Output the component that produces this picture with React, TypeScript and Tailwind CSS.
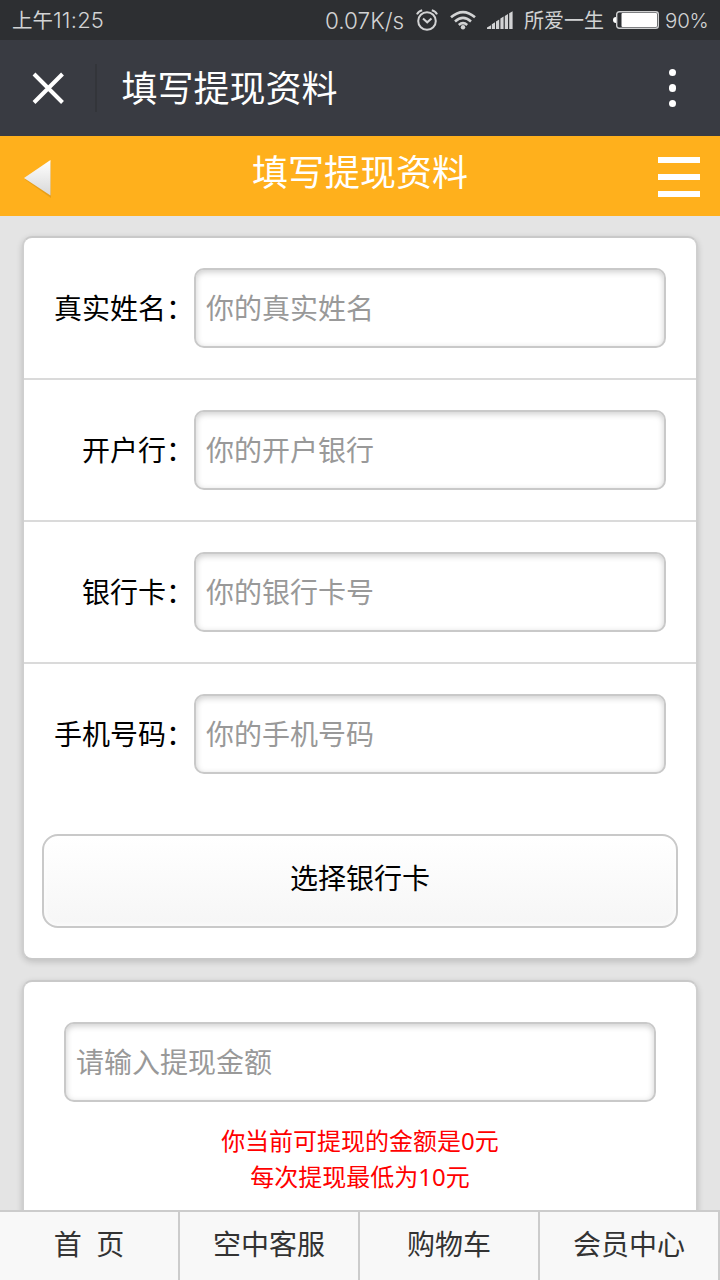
const fields = [
  { label: '真实姓名：', placeholder: '你的真实姓名' },
  { label: '开户行：', placeholder: '你的开户银行' },
  { label: '银行卡：', placeholder: '你的银行卡号' },
  { label: '手机号码：', placeholder: '你的手机号码' },
];

const tabs = ['首\u00a0\u00a0页', '空中客服', '购物车', '会员中心'];

const inputClass =
  'block h-20 rounded-[10px] border-2 border-[#c9c9c9] bg-white px-2.5 text-[28px] text-black placeholder:text-[#999] shadow-[inset_0_2px_6px_rgba(0,0,0,0.2)] outline-none';

const cardClass =
  'rounded-[10px] border-2 border-[#c9c9c9] border-x-[#cfcfcf] bg-white shadow-[0_2px_6px_rgba(0,0,0,0.16)]';

function StatusBar() {
  return (
    <div className="flex h-10 items-center bg-[#2d2f32] pl-3 text-[20px] leading-10 text-[#d2d3d4]">
      <span className="w-[313px] pt-px font-['Inter','Noto_Sans_CJK_SC',sans-serif] text-[20.5px]">
        上午<span className="text-[22px] font-light tracking-[0.2px]">11:25</span>
      </span>
      <span className="w-[91px] pt-0.5 font-['Inter'] text-[22.5px] font-light">0.07K/s</span>

      {/* Alarm */}
      <svg className="h-[22px] w-[22px]" viewBox="0 0 22 22" fill="none" stroke="currentColor" strokeWidth="2">
        <circle cx="11" cy="12" r="8.8" />
        <path d="M7 9.5l4.200 3.800 4.300-3.900M1 5.400Q2.400 2.200 6.200 1.200M21 5.400Q19.600 2.200 15.800 1.200" />
      </svg>

      {/* Wifi */}
      <svg className="ml-3 h-5 w-[26px]" viewBox="0 0 26 20" fill="none" stroke="currentColor" strokeWidth="2.6">
        <path d="M1 7.3Q13-3.2 25 7.3M5 11.4Q13 4.4 21 11.4M8.8 15Q13 11.4 17.2 15" />
        <circle cx="13" cy="17.3" r="2.2" fill="currentColor" stroke="none" />
      </svg>

      {/* Signal */}
      <svg className="ml-[11px] h-[18px] w-[26px]" viewBox="0 0 26 18" fill="currentColor">
        <path d="M0 18v-1.500l4-2.200V18zM4.800 13.200l3.200-2V18H4.800zM9 10.600l3.200-2V18H9zM13.400 7.500l3.200-2V18h-3.200zM17.800 5l3.200-2V18h-3.200zM22.200 2.200l3.400-2V18h-3.400z" />
      </svg>

      <span className="ml-[11px] w-[89px] pt-0.5 text-[20px]">所爱一生</span>

      {/* Battery */}
      <svg className="h-5 w-[46px]" viewBox="0 0 46 20">
        <path d="M0 10q0-3 3-3v6q-3 0-3-3z" fill="#fff" />
        <rect x="3.7" y="1.7" width="41.6" height="16.6" rx="2.5" fill="none" stroke="#cfd0d1" strokeWidth="1.4" />
        <rect x="8.5" y="3" width="35.5" height="14" rx="1" fill="#fff" />
      </svg>
      <span className="ml-[6px] pt-0.5 font-['Inter'] text-[20.5px] font-light tracking-[-0.2px]">90%</span>
    </div>
  );
}

function TitleBar() {
  return (
    <div className="flex h-24 items-center bg-[#393b42] text-white">
      <div className="flex h-12 w-[97px] items-center border-r-2 border-[#33353a] pl-8">
        <svg className="h-8 w-8" viewBox="0 0 32 32" stroke="currentColor" strokeWidth="4">
          <path d="M2 2L30.500 30.500M30.500 2L2 30.500" />
        </svg>
      </div>
      <h1 className="ml-[24.5px] flex-1 pt-0.5 text-[36px] leading-[96px]">填写提现资料</h1>
      <div className="mr-[44px] flex flex-col gap-2">
        <i className="size-[7.5px] rounded-full bg-white" />
        <i className="size-[7.5px] rounded-full bg-white" />
        <i className="size-[7.5px] rounded-full bg-white" />
      </div>
    </div>
  );
}

function PageHeader() {
  return (
    <header className="flex h-20 items-start bg-[#ffb01c] px-5 text-white">
      <svg className="mt-[22px] h-10 w-[42px]" viewBox="0 0 42 40">
        <defs>
          <linearGradient id="arrow" x1="0" y1="0" x2="0" y2="1">
            <stop offset="0" stopColor="#fff" />
            <stop offset="1" stopColor="#d8d8d8" />
          </linearGradient>
        </defs>
        <path d="M5 21.5L31 4v36z" fill="#b97d10" opacity=".35" />
        <path d="M4 20L30.5 2v35.500z" fill="url(#arrow)" />
      </svg>
      <h2 className="flex-1 text-center text-[36px] leading-[74px]">填写提现资料</h2>
      <div className="mt-[21px] flex w-[42px] flex-col gap-[11px]">
        <i className="h-1.5 bg-white" />
        <i className="h-1.5 bg-white" />
        <i className="h-1.5 bg-white" />
      </div>
    </header>
  );
}

export default function App() {
  return (
    <div className="flex h-[1280px] w-[720px] flex-col overflow-hidden bg-[#e4e4e4] font-['Noto_Sans','Noto_Sans_CJK_SC',sans-serif]">
      <StatusBar />
      <TitleBar />
      <PageHeader />

      <main className="flex min-h-0 flex-1 flex-col gap-5 overflow-hidden px-[22px] pt-5">
        {/* Account details */}
        <section className={`${cardClass} shrink-0 pb-[30px]`}>
          {fields.map((field) => (
            <div
              key={field.label}
              className="flex items-center border-b-2 border-[#dadada] py-[30px] pr-[30px] last-of-type:border-b-0"
            >
              <label className="w-[170px] text-right text-[28px] leading-10 text-black">{field.label}</label>
              <input className={`${inputClass} w-[472px]`} placeholder={field.placeholder} />
            </div>
          ))}
          <button className="mx-[18px] mt-[30px] block h-[94px] w-[636px] rounded-[16px] border-2 border-[#c9c9c9] bg-linear-to-b from-white to-[#f6f6f6] pb-1.5 text-[28px] text-black shadow-[inset_0_0_6px_#fff]">
            选择银行卡
          </button>
        </section>

        {/* Amount */}
        <section className={`${cardClass} h-[400px] shrink-0 px-10 pt-10`}>
          <input className={`${inputClass} w-full`} placeholder="请输入提现金额" />
          <p className="mt-[21px] text-center text-[24px] leading-9 text-[#f00]">
            你当前可提现的金额是0元
            <br />
            每次提现最低为10元
          </p>
        </section>
      </main>

      <nav className="grid h-[70px] shrink-0 grid-cols-4 border-t-2 border-[#ccc] bg-[#f8f8f8]">
        {tabs.map((tab) => (
          <a key={tab} className="border-r-2 border-[#ccc] text-center text-[28px] leading-[64px] text-[#333]">
            {tab}
          </a>
        ))}
      </nav>
    </div>
  );
}
